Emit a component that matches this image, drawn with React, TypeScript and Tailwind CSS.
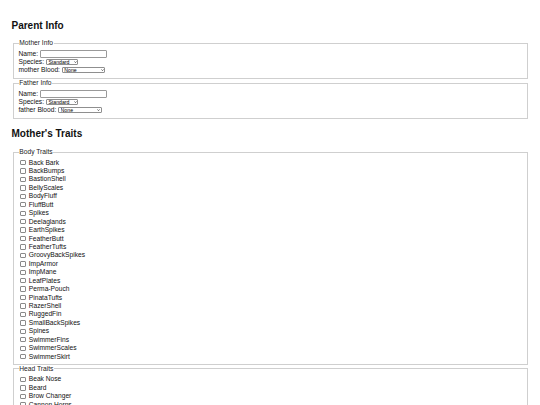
import React, { useState } from 'react';

const bodyTraits = [
  'Back Bark', 'BackBumps', 'BastionShell', 'BellyScales', 'BodyFluff', 'FluffButt',
  'Spikes', 'Deelaglands', 'EarthSpikes', 'FeatherButt', 'FeatherTufts', 'GroovyBackSpikes',
  'ImpArmor', 'ImpMane', 'LeafPlates', 'Perma-Pouch', 'PinataTufts', 'RazerShell',
  'RuggedFin', 'SmallBackSpikes', 'Spines', 'SwimmerFins', 'SwimmerScales', 'SwimmerSkirt',
];

const headTraits = ['Beak Nose', 'Beard', 'Brow Changer', 'Cannon Horns', 'Cheek Fins', 'Crest', 'Ear Tufts'];

const Chevron: React.FC = () => (
  <svg
    viewBox="0 0 10 6"
    className="pointer-events-none absolute right-[1.5px] top-1/2 h-[1.8px] w-[3px] -translate-y-1/2"
  >
    <path d="M1 1 L5 5 L9 1" fill="none" stroke="#111" strokeWidth="2" />
  </svg>
);

const SelectBox: React.FC<{ options: string[]; width: string }> = ({ options, width }) => {
  const [value, setValue] = useState(options[0]);
  return (
    <div className={`relative h-[6.2px] ${width}`}>
      <select
        value={value}
        onChange={(e) => setValue(e.target.value)}
        className="block h-full w-full appearance-none rounded-[1px] border border-[#8f8f8f] bg-white py-0 pl-[1.5px] text-[5.2px] leading-[5px] text-black outline-none"
      >
        {options.map((o) => (
          <option key={o}>{o}</option>
        ))}
      </select>
      <Chevron />
    </div>
  );
};

const Box: React.FC<{ title: string; children: React.ReactNode; className?: string }> = ({
  title,
  children,
  className = '',
}) => (
  <fieldset className={`mx-[1px] border border-[#cfcfcf] px-[5px] text-[6.67px] leading-[8px] ${className}`}>
    <legend className="px-[0.8px] text-[#222]">{title}</legend>
    <div className="pt-[2.3px]">{children}</div>
  </fieldset>
);

const ParentBox: React.FC<{ who: 'mother' | 'father' }> = ({ who }) => {
  const [name, setName] = useState('');
  return (
    <Box title={who === 'mother' ? 'Mother Info' : 'Father Info'} className="pb-[4px]">
      <div className="flex h-[8.7px] items-center gap-[1.85px]">
        <span>Name:</span>
        <input
          type="text"
          value={name}
          onChange={(e) => setName(e.target.value)}
          className="h-[8.5px] w-[67px] rounded-[1px] border border-[#999] bg-white px-[1px] text-[6px] outline-none"
        />
      </div>
      <div className="flex h-[8px] items-center gap-[1.85px]">
        <span>Species:</span>
        <SelectBox options={['Standard', 'Rare', 'Mutant']} width="w-[32.5px]" />
      </div>
      <div className="flex h-[8px] items-center gap-[1.85px]">
        <span>{who} Blood:</span>
        <SelectBox options={['None', 'Half', 'Full']} width="w-[43.7px]" />
      </div>
    </Box>
  );
};

const TraitList: React.FC<{ items: string[] }> = ({ items }) => {
  const [checked, setChecked] = useState<Record<string, boolean>>({});
  return (
    <div className="flex flex-col">
      {items.map((t) => (
        <label key={t} className="flex h-[8.45px] items-center">
          <input
            type="checkbox"
            checked={!!checked[t]}
            onChange={() => setChecked({ ...checked, [t]: !checked[t] })}
            className="ml-[1.7px] mr-[3.2px] h-[5.4px] w-[5.4px] appearance-none rounded-[1px] border border-[#8a8a8a] bg-white checked:bg-[#1a73e8]"
          />
          <span>{t}</span>
        </label>
      ))}
    </div>
  );
};

export default function App() {
  return (
    <div className="min-h-screen bg-white px-[11.5px] pt-[20.3px] pb-[20px] font-['Liberation_Sans',Arial,sans-serif] text-[#111]">
      <h2 className="mb-[7.5px] text-[10px] font-bold leading-[11.5px]">Parent Info</h2>
      <ParentBox who="mother" />
      <ParentBox who="father" />

      <h2 className="mt-[8.8px] mb-[8.5px] text-[10px] font-bold leading-[11.5px]">Mother's Traits</h2>
      <Box title="Body Traits" className="pb-[3px]">
        <TraitList items={bodyTraits} />
      </Box>
      <Box title="Head Traits" className="pb-[3px]">
        <TraitList items={headTraits} />
      </Box>
    </div>
  );
}
